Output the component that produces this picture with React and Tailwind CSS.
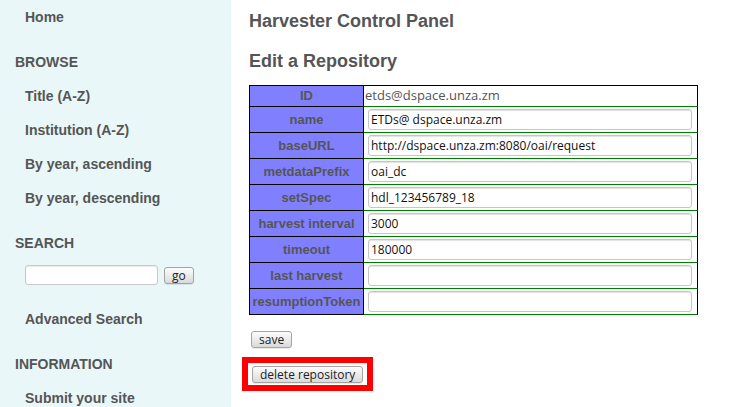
import React from "react";

const SANS = "font-['Liberation_Sans',Arial,sans-serif]";
const FORM = "font-['Open_Sans','Noto_Sans',sans-serif]";

function NavItem({ children }) {
  return (
    <div className="h-[34px] flex items-center pl-[25px] text-[14px] font-bold text-[#555]">
      {children}
    </div>
  );
}

function NavHead({ children }) {
  return (
    <div className="h-[34px] mt-[11px] flex items-center pl-[15px] text-[14px] font-bold text-[#555]">
      {children}
    </div>
  );
}

function Btn({ children }) {
  return (
    <button
      className={`${FORM} h-[17px] px-[7px] text-[12px] leading-none text-[#222] rounded-[3px] border border-[#a3a3a3] bg-gradient-to-b from-[#fdfdfd] to-[#dadada] shadow-[0_1px_0_rgba(0,0,0,0.08)] flex items-center`}
    >
      {children}
    </button>
  );
}

const rows = [
  ["name", "ETDs@ dspace.unza.zm"],
  ["baseURL", "http://dspace.unza.zm:8080/oai/request"],
  ["metdataPrefix", "oai_dc"],
  ["setSpec", "hdl_123456789_18"],
  ["harvest interval", "3000"],
  ["timeout", "180000"],
  ["last harvest", ""],
  ["resumptionToken", ""],
];

export default function App() {
  return (
    <div className={`${SANS} flex min-h-screen w-[742px] h-[407px] overflow-hidden bg-white`}>
      <aside className="w-[231px] shrink-0 bg-[#e9f7f9]">
        <NavItem>Home</NavItem>
        <NavHead>BROWSE</NavHead>
        <NavItem>Title (A-Z)</NavItem>
        <NavItem>Institution (A-Z)</NavItem>
        <NavItem>By year, ascending</NavItem>
        <NavItem>By year, descending</NavItem>
        <NavHead>SEARCH</NavHead>
        <div className="h-[42px] flex items-start pl-[25px] pt-[5px] gap-[6px]">
          <div className="w-[133px] h-[20px] bg-white border border-[#c8c8c8] rounded-[3px] shadow-[inset_0_1px_1px_rgba(0,0,0,0.08)]" />
          <div className="mt-[2px]">
            <Btn>go</Btn>
          </div>
        </div>
        <NavItem>Advanced Search</NavItem>
        <NavHead>INFORMATION</NavHead>
        <NavItem>Submit your site</NavItem>
      </aside>

      <main className="flex-1 pl-[18px]">
        <h1 className="mt-[11px] text-[18px] leading-[21px] font-bold text-[#555]">
          Harvester Control Panel
        </h1>
        <h2 className="mt-[19px] text-[18px] leading-[21px] font-bold text-[#555]">
          Edit a Repository
        </h2>

        <div className="mt-[13px] w-[449px] border-t border-black">
          <div className="flex h-[21px]">
            <div className="w-[115px] shrink-0 bg-[#8080ff] border-l border-r border-b border-black flex items-center justify-center text-[13px] font-bold text-[#555]">
              ID
            </div>
            <div
              className={`${FORM} flex-1 border-b border-b-[#008000] border-r border-r-black flex items-center pl-px text-[13px] text-[#555]`}
            >
              etds@dspace.unza.zm
            </div>
          </div>
          {rows.map(([label, value]) => (
            <div key={label} className="flex h-[26px]">
              <div className="w-[115px] shrink-0 bg-[#8080ff] border-l border-r border-b border-black flex items-center justify-center text-[13px] font-bold text-[#555] whitespace-nowrap">
                {label}
              </div>
              <div className="flex-1 border-b border-b-[#008000] border-r border-r-black flex items-center pl-[4px]">
                <div
                  className={`${FORM} w-[324px] h-[21px] bg-white border border-[#c6c6c6] rounded-[3px] shadow-[inset_0_1px_1px_rgba(0,0,0,0.12)] flex items-center px-[2px] text-[12px] text-[#111] whitespace-nowrap overflow-hidden`}
                >
                  {value}
                </div>
              </div>
            </div>
          ))}
        </div>

        <div className="mt-[16px] ml-[2px] flex">
          <Btn>save</Btn>
        </div>

        <div className="mt-[9px] -ml-[7px] inline-flex border-[6px] border-[#ff0000] pl-[4px] pr-[4px] pt-[3px] pb-[2px]">
          <Btn>delete repository</Btn>
        </div>
      </main>
    </div>
  );
}
